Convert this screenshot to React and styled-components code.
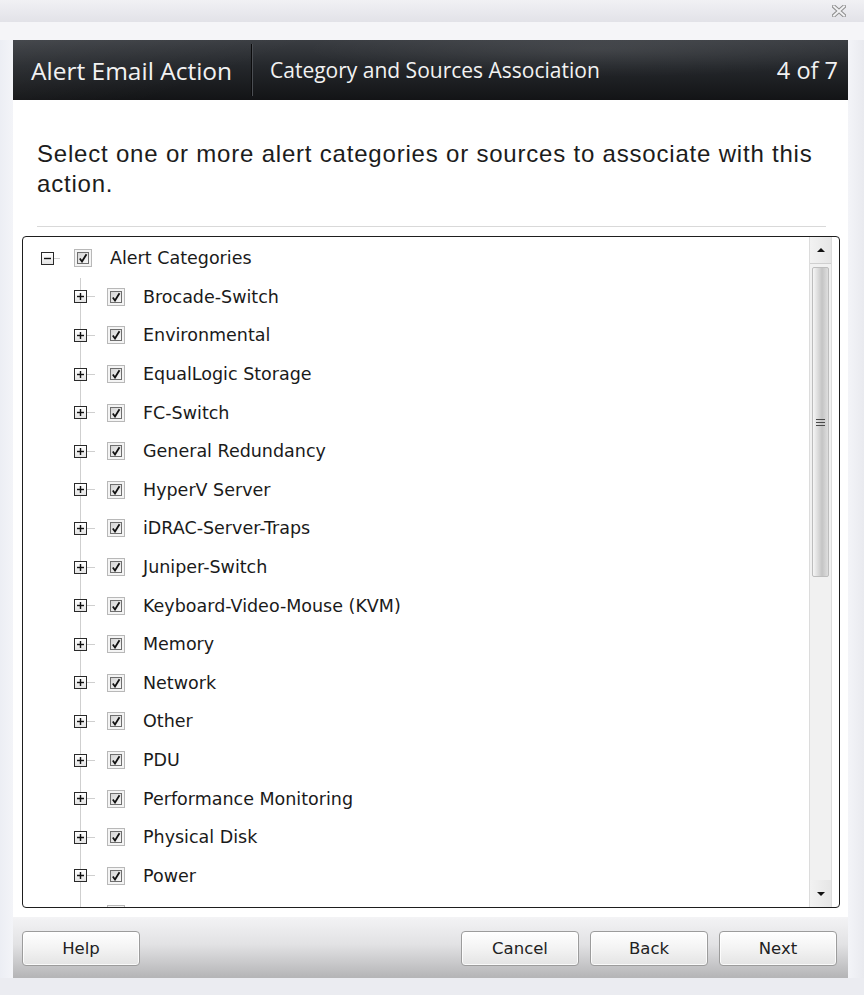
import React from 'react';
import styled, { createGlobalStyle } from 'styled-components';

const GlobalStyle = createGlobalStyle`
  html, body {
    margin: 0;
    padding: 0;
    background: #eff0f4;
  }
  * {
    box-sizing: border-box;
  }
`;

const categories = [
  'Brocade-Switch',
  'Environmental',
  'EqualLogic Storage',
  'FC-Switch',
  'General Redundancy',
  'HyperV Server',
  'iDRAC-Server-Traps',
  'Juniper-Switch',
  'Keyboard-Video-Mouse (KVM)',
  'Memory',
  'Network',
  'Other',
  'PDU',
  'Performance Monitoring',
  'Physical Disk',
  'Power',
];

const Window = styled.div`
  width: 864px;
  height: 995px;
  display: flex;
  flex-direction: column;
  background: #eff0f4;
  overflow: hidden;
`;

const TopStrip = styled.div`
  height: 22px;
  display: flex;
  justify-content: flex-end;
  align-items: center;
  padding-right: 18px;
  background: linear-gradient(180deg, #f1f1f4 0%, #e2e2e8 100%);
`;

const Gap = styled.div`
  height: 18px;
  background: #f5f5f8;
`;

const Frame = styled.div`
  flex: 1;
  display: flex;
  flex-direction: column;
  padding: 0 16px 0 13px;
  background: linear-gradient(90deg, #eceef4 0px, #f3f4f8 13px, #f3f4f8 848px, #e9eaef 864px);
`;

const Header = styled.div`
  height: 60px;
  display: flex;
  align-items: center;
  color: #f2f2f2;
  font-family: 'Open Sans', 'Liberation Sans', sans-serif;
  background:
    radial-gradient(ellipse 420px 40px at 70% 15%, rgba(255, 255, 255, 0.08), rgba(255, 255, 255, 0) 70%),
    linear-gradient(160deg, rgba(255, 255, 255, 0.06) 0%, rgba(255, 255, 255, 0) 30%),
    linear-gradient(180deg, #3a3d42 0%, #24272b 45%, #131416 100%);
`;

const Title = styled.div`
  font-size: 24.5px;
  padding-left: 18px;
  width: 238px;
  white-space: nowrap;
`;

const Separator = styled.div`
  align-self: stretch;
  width: 2px;
  margin: 4px 0;
  border-left: 1px solid #0b0b0c;
  border-right: 1px solid #4b4e53;
`;

const Subtitle = styled.div`
  flex: 1;
  font-size: 21px;
  padding-left: 17px;
  white-space: nowrap;
`;

const Step = styled.div`
  font-size: 23.5px;
  padding-right: 10px;
  white-space: nowrap;
`;

const Panel = styled.div`
  height: 817px;
  display: flex;
  flex-direction: column;
  background: #ffffff;
  padding: 0 8px 9px 9px;
`;

const Instruction = styled.p`
  margin: 39px 0 0 0;
  padding: 0 5px 0 15px;
  font-family: 'Liberation Sans', Arial, sans-serif;
  font-size: 24px;
  line-height: 30px;
  letter-spacing: 0.8px;
  color: #1c1c1c;
`;

const Divider = styled.div`
  height: 1px;
  margin: 27px 14px 9px 15px;
  background: #d9d9d9;
`;

const TreeBox = styled.div`
  flex: 1;
  display: flex;
  border: 1.5px solid #1e1e1e;
  border-radius: 4px;
  overflow: hidden;
  min-height: 0;
`;

const TreeList = styled.div`
  flex: 1;
  overflow: hidden;
  padding: 2px 0 0 17px;
  font-family: 'DejaVu Sans', Verdana, sans-serif;
  font-size: 17.5px;
  color: #1a1a1a;
`;

const Row = styled.div`
  height: 38.6px;
  display: flex;
  align-items: center;
`;

const Children = styled.div`
  margin-left: 40px;
  border-left: 1px solid #cfcfcf;
`;

const Expander = styled.span`
  width: 13px;
  height: 13px;
  flex: none;
  display: flex;
  align-items: center;
  justify-content: center;
  border: 1px solid #2a2a2a;
  background: linear-gradient(180deg, #ffffff 0%, #e4e4e4 100%);
  margin-left: ${(p) => (p.$child ? '-7px' : '1px')};
`;

const Stub = styled.span`
  width: ${(p) => (p.$child ? '8px' : '6px')};
  height: 1px;
  flex: none;
  background: #cfcfcf;
`;

const CheckBox = styled.span`
  width: 18px;
  height: 18px;
  flex: none;
  padding: 2px;
  margin-left: ${(p) => (p.$child ? '12px' : '14px')};
  border: 1px solid #b8b8b8;
  background: #f4f4f4;
  display: flex;
`;

const CheckInner = styled.span`
  flex: 1;
  display: flex;
  align-items: center;
  justify-content: center;
  border: 1px solid #6e6e6e;
  background: linear-gradient(135deg, #d4d4d4 0%, #f7f7f7 100%);
`;

const Label = styled.span`
  margin-left: ${(p) => (p.$child ? '18px' : '18px')};
  white-space: nowrap;
`;

const ScrollBar = styled.div`
  width: 23px;
  flex: none;
  margin-right: 7px;
  display: flex;
  flex-direction: column;
  background: #f1f1f1;
  border-left: 1px solid #dcdcdc;
  border-right: 1px solid #dcdcdc;
`;

const ArrowButton = styled.div`
  height: 27px;
  flex: none;
  display: flex;
  align-items: center;
  justify-content: center;
  background: linear-gradient(90deg, #f2f2f2, #e6e6e6);
  border-bottom: ${(p) => (p.$down ? 'none' : '1px solid #cfcfcf')};
`;

const Triangle = styled.span`
  width: 0;
  height: 0;
  border-left: 4px solid transparent;
  border-right: 4px solid transparent;
  ${(p) => (p.$down ? 'border-top: 4px solid #111;' : 'border-bottom: 4px solid #111;')}
`;

const Thumb = styled.div`
  height: 310px;
  flex: none;
  margin: 3px 2px 0 2px;
  display: flex;
  align-items: center;
  justify-content: center;
  border: 1px solid #bdbdbd;
  border-radius: 2px;
  background: linear-gradient(90deg, #f6f6f6 0%, #d6d6d6 40%, #c4c4c4 60%, #dedede 100%);
`;

const Grip = styled.span`
  width: 9px;
  height: 7px;
  border-top: 1px solid #4a4a4a;
  border-bottom: 1px solid #4a4a4a;
  position: relative;
  &::after {
    content: '';
    position: absolute;
    left: 0;
    right: 0;
    top: 2px;
    height: 1px;
    background: #4a4a4a;
  }
`;

const Track = styled.div`
  flex: 1;
`;

const Footer = styled.div`
  height: 61px;
  display: flex;
  align-items: flex-start;
  padding: 14px 11px 0 9px;
  gap: 11px;
  background: linear-gradient(180deg, #f3f3f5 0%, #e2e2e4 45%, #b4b4b6 100%);
`;

const Spacer = styled.div`
  flex: 1;
`;

const Button = styled.button`
  width: 118px;
  height: 35px;
  border: 1px solid #9c9c9c;
  border-radius: 4px;
  background: linear-gradient(180deg, #ffffff 0%, #f3f3f3 50%, #e4e4e4 100%);
  box-shadow: inset 0 0 0 1px rgba(255, 255, 255, 0.8);
  font-family: 'DejaVu Sans', Verdana, sans-serif;
  font-size: 16.5px;
  color: #222;
  padding: 0;
`;

const BottomStrip = styled.div`
  height: 17px;
  background: #ebecf1;
`;

const CloseIcon = () => (
  <svg width="14" height="12" viewBox="0 0 14 12">
    <path d="M2 1.5 L12 10.5 M12 1.5 L2 10.5" stroke="#8e8e8e" strokeWidth="4" strokeLinecap="square" />
    <path d="M2 1.5 L12 10.5 M12 1.5 L2 10.5" stroke="#f1f1f3" strokeWidth="2" strokeLinecap="square" />
  </svg>
);

const Sign = ({ plus }) => (
  <svg width="7" height="7" viewBox="0 0 7 7">
    <path d="M0 3.5 H7" stroke="#111" strokeWidth="1.4" />
    {plus && <path d="M3.5 0 V7" stroke="#111" strokeWidth="1.4" />}
  </svg>
);

const Check = () => (
  <svg width="10" height="10" viewBox="0 0 10 10">
    <path d="M1.8 5.5 L4 8.5 L8.5 1.2" fill="none" stroke="#111" strokeWidth="1.8" />
  </svg>
);

const TreeItem = ({ label, child }) => (
  <Row>
    <Expander $child={child}>
      <Sign plus={child} />
    </Expander>
    <Stub $child={child} />
    <CheckBox $child={child}>
      <CheckInner>
        <Check />
      </CheckInner>
    </CheckBox>
    {label && <Label $child={child}>{label}</Label>}
  </Row>
);

const App = () => {
  return (
    <Window>
      <GlobalStyle />
      <TopStrip>
        <CloseIcon />
      </TopStrip>
      <Gap />
      <Frame>
        <Header>
          <Title>Alert Email Action</Title>
          <Separator />
          <Subtitle>Category and Sources Association</Subtitle>
          <Step>4 of 7</Step>
        </Header>
        <Panel>
          <Instruction>
            Select one or more alert categories or sources to associate with this action.
          </Instruction>
          <Divider />
          <TreeBox>
            <TreeList>
              <TreeItem label="Alert Categories" />
              <Children>
                {categories.map((c) => (
                  <TreeItem key={c} label={c} child />
                ))}
                {/* next row, scrolled below the edge of the box */}
                <TreeItem child />
              </Children>
            </TreeList>
            <ScrollBar>
              <ArrowButton>
                <Triangle />
              </ArrowButton>
              <Thumb>
                <Grip />
              </Thumb>
              <Track />
              <ArrowButton $down>
                <Triangle $down />
              </ArrowButton>
            </ScrollBar>
          </TreeBox>
        </Panel>
        <Footer>
          <Button>Help</Button>
          <Spacer />
          <Button>Cancel</Button>
          <Button>Back</Button>
          <Button>Next</Button>
        </Footer>
      </Frame>
      <BottomStrip />
    </Window>
  );
};

export default App;
